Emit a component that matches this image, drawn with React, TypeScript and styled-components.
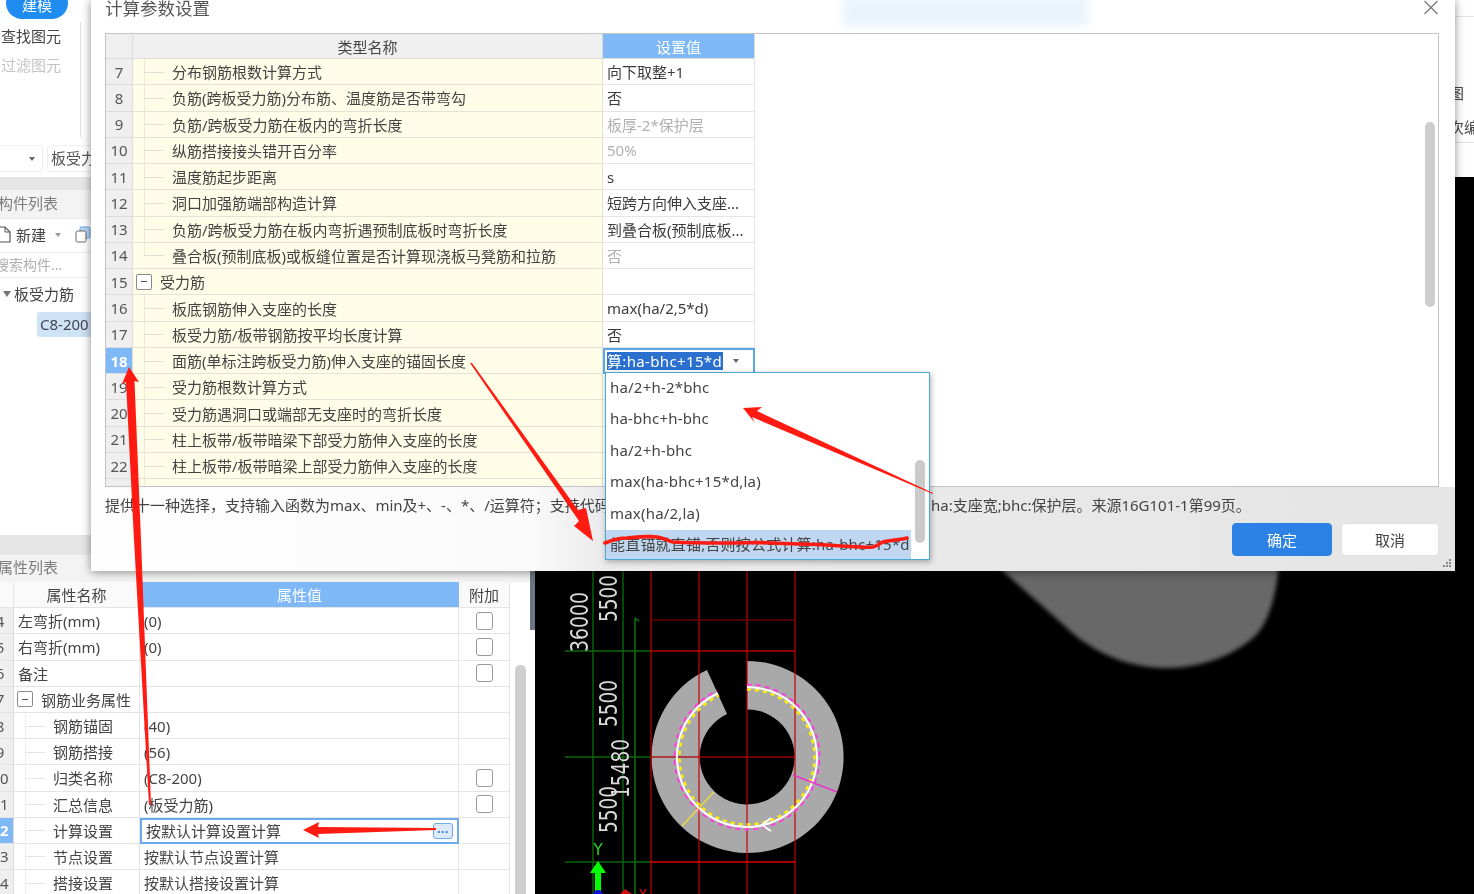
import React from "react";
import styled, { createGlobalStyle } from "styled-components";

const Global = createGlobalStyle`
  html, body { margin: 0; padding: 0; background: #fff; }
  body { font-family: "Noto Sans", "Noto Sans CJK SC", sans-serif; color: #3c3c3c; }
  * { box-sizing: border-box; }
`;

const Page = styled.div`
  position: relative;
  width: 1474px;
  height: 894px;
  overflow: hidden;
  display: flex;
  background: #fff;
  font-size: 15px;
  filter: blur(0.5px);
`;

/* ---------- left panel ---------- */
const LeftPanel = styled.div`
  width: 535px;
  height: 894px;
  flex: none;
  display: flex;
  flex-direction: column;
  overflow: hidden;
  background: #fff;
`;
const TopBlock = styled.div`
  height: 142px;
  flex: none;
  display: flex;
  flex-direction: column;
`;
const ModeButton = styled.div`
  width: 62px;
  height: 32px;
  margin: -13px 0 0 6px;
  padding-top: 2px;
  border-radius: 16px;
  background: #1e8cf0;
  color: #fff;
  display: flex;
  align-items: center;
  justify-content: center;
`;
const ToolGroup = styled.div`
  width: 81px;
  height: 115px;
  margin-top: 3px;
  padding-left: 1px;
  border-right: 1px solid #dedede;
`;
const ToolItem = styled.div<{ $off?: boolean }>`
  height: 29px;
  line-height: 29px;
  color: ${(p) => (p.$off ? "#c4c4c4" : "#444")};
`;
const FilterRow = styled.div`
  height: 27px;
  margin-top: 3px;
  flex: none;
  display: flex;
  gap: 4px;
`;
const SelectBox = styled.div`
  width: 43px;
  height: 27px;
  border: 1px solid #efefef;
  border-left: 0;
  border-radius: 0 4px 4px 0;
  display: flex;
  align-items: center;
  justify-content: flex-end;
  padding-right: 7px;
`;
const Caret = styled.span<{ $c?: string }>`
  width: 0;
  height: 0;
  border-left: 3px solid transparent;
  border-right: 3px solid transparent;
  border-top: 4px solid ${(p) => p.$c || "#666"};
`;
const InputBox = styled.div`
  width: 200px;
  height: 27px;
  border: 1px solid #efefef;
  border-radius: 4px;
  padding-left: 3px;
  line-height: 24px;
  color: #555;
  white-space: nowrap;
`;
const GrayBand = styled.div<{ $h: number; $mt?: number }>`
  height: ${(p) => p.$h}px;
  margin-top: ${(p) => p.$mt || 0}px;
  flex: none;
  background: #e6e6e6;
`;
const SectionHead = styled.div<{ $h: number }>`
  height: ${(p) => p.$h}px;
  flex: none;
  display: flex;
  align-items: center;
  padding-bottom: 4px;
  background: #f3f3f3;
  color: #7d7d7d;
  white-space: nowrap;
  text-indent: -2px;
`;
const NewRow = styled.div`
  height: 34px;
  flex: none;
  display: flex;
  align-items: center;
  padding-bottom: 2px;
  border-top: 1px solid #ececec;
  color: #444;
`;
const NewLabel = styled.span`
  margin-left: 5px;
`;
const NewCaret = styled.span`
  margin: 0 14px 0 9px;
  display: inline-flex;
`;
const SearchRow = styled.div`
  height: 26px;
  flex: none;
  display: flex;
  align-items: center;
  padding-bottom: 2px;
  border-top: 1px solid #ececec;
  border-bottom: 1px solid #ececec;
  color: #b0b0b0;
  font-size: 14px;
  white-space: nowrap;
  text-indent: -5px;
`;
const TreeRoot = styled.div`
  height: 22px;
  margin-top: 6px;
  flex: none;
  display: flex;
  align-items: center;
  gap: 3px;
  padding: 0 0 3px 3px;
  color: #444;
`;
const TreeCaret = styled.span`
  width: 0;
  height: 0;
  border-left: 4px solid transparent;
  border-right: 4px solid transparent;
  border-top: 6px solid #777;
`;
const TreeLeaf = styled.div`
  width: 70px;
  height: 25px;
  margin: 6px 0 0 37px;
  flex: none;
  padding-left: 3px;
  border-radius: 3px;
  background: #cfe3f6;
  line-height: 24px;
  white-space: nowrap;
  overflow: hidden;
  color: #445;
`;
const Filler = styled.div`
  flex: 1;
`;
const PropTable = styled.div`
  position: relative;
  flex: none;
  height: 312px;
`;
const PropRow = styled.div<{ $h?: number }>`
  display: grid;
  grid-template-columns: 14px 126px 319px 51px;
  height: ${(p) => p.$h || 26.2}px;
`;
const Cell = styled.div`
  border-bottom: 1.5px solid #e4e4e4;
  border-right: 1.5px solid #e4e4e4;
  display: flex;
  align-items: center;
  position: relative;
  white-space: nowrap;
  color: #444;
`;
const NumCell = styled(Cell)<{ $active?: boolean }>`
  background: ${(p) => (p.$active ? "#7eb8f6" : "#efefef")};
  color: ${(p) => (p.$active ? "#fff" : "#555")};
  font-weight: ${(p) => (p.$active ? 700 : 400)};
  border-right: 1.5px solid #dcdcdc;
`;
const NumText = styled.span`
  display: block;
  flex: none;
  width: 28px;
  margin-left: -14px;
  text-align: center;
`;
const HeadCell = styled(Cell)<{ $blue?: boolean }>`
  justify-content: center;
  background: ${(p) => (p.$blue ? "#7eb8f6" : "#fafafa")};
  color: ${(p) => (p.$blue ? "#fff" : "#444")};
  border-right: ${(p) => (p.$blue ? "0" : "1.5px solid #e4e4e4")};
`;
const PropName = styled(Cell)<{ $tree?: boolean; $group?: boolean }>`
  padding-left: ${(p) => (p.$tree ? 39 : p.$group ? 3 : 4)}px;
  ${(p) =>
    p.$tree
      ? `
    &::before { content: ""; position: absolute; left: 11px; top: 0; bottom: 0; width: 1px; background: #eeeeee; }
    &::after { content: ""; position: absolute; left: 11px; top: 50%; width: 20px; height: 1px; background: #e4e4e4; }
  `
      : ""}
`;
const PropValue = styled(Cell)`
  padding-left: 4px;
`;
const EditCell = styled.div`
  border: 2px solid #6cacee;
  display: flex;
  align-items: center;
  justify-content: space-between;
  padding: 0 4px 0 4px;
  white-space: nowrap;
  color: #444;
`;
const MoreButton = styled.div`
  width: 20px;
  height: 16px;
  border: 1px solid #6cacee;
  border-radius: 3px;
  background: #dceafb;
  color: #2b78d0;
  font-size: 12px;
  line-height: 9px;
  text-align: center;
  font-weight: 700;
  letter-spacing: 0.5px;
`;
const CheckCell = styled(Cell)`
  justify-content: center;
`;
const Check = styled.span`
  width: 17px;
  height: 18px;
  border: 1.5px solid #9a9a9a;
  border-radius: 3px;
  background: #fff;
`;
const FoldBox = styled.span`
  flex: none;
  width: 16px;
  height: 16px;
  border: 1.2px solid #8a8a8a;
  border-radius: 2px;
  margin-right: 8px;
  display: flex;
  align-items: center;
  justify-content: center;
  background: #fff;
  &::after { content: ""; width: 6px; height: 1.2px; background: #555; }
`;
const PropScroll = styled.div`
  position: absolute;
  left: 515px;
  top: 83px;
  width: 11px;
  height: 300px;
  border-radius: 5px;
  background: #cfcfcf;
`;
const SideBar = styled.div`
  position: absolute;
  left: 530px;
  top: -11px;
  width: 5px;
  height: 59px;
  background: #6b7680;
`;

/* ---------- right ---------- */
const RightColumn = styled.div`
  flex: 1;
  display: flex;
  flex-direction: column;
`;
const TopStrip = styled.div`
  height: 177px;
  flex: none;
  padding: 16px 0 0 914px;
  background: #fff;
  white-space: nowrap;
  color: #444;
`;
const StripLine = styled.div<{ $mt?: number }>`
  height: 1px;
  margin-left: -914px;
  margin-top: ${(p) => p.$mt || 0}px;
  background: #e4e4e4;
`;
const StripLabel = styled.div<{ $mt: number }>`
  margin-top: ${(p) => p.$mt}px;
  line-height: 20px;
  height: 20px;
`;
const Canvas = styled.div`
  flex: 1;
  background: #000;
  overflow: hidden;
  svg { display: block; }
`;

/* ---------- dialog ---------- */
const Dialog = styled.div`
  position: absolute;
  left: 91px;
  top: 0;
  width: 1364px;
  height: 571px;
  background: #fff;
  box-shadow: 0 1px 9px rgba(0, 0, 0, 0.45);
  display: flex;
  flex-direction: column;
  overflow: hidden;
`;
const TitleBar = styled.div`
  position: relative;
  height: 33px;
  flex: none;
  padding: 0 16px 0 14px;
  display: flex;
  justify-content: space-between;
  align-items: flex-start;
`;
const Title = styled.div`
  font-size: 17.5px;
  line-height: 16px;
  color: #555;
  white-space: nowrap;
`;
const Smudge = styled.div`
  position: absolute;
  left: 752px;
  top: -4px;
  width: 245px;
  height: 30px;
  background: #e9f4fd;
  filter: blur(5px);
`;
const ParamGrid = styled.div`
  position: relative;
  margin: 0 16px 0 14px;
  height: 454px;
  flex: none;
  border: 1px solid #c4c4c4;
  overflow: hidden;
  background: #fff;
`;
const GridRow = styled.div<{ $h?: number }>`
  display: grid;
  grid-template-columns: 27px 470px 152px;
  width: 649px;
  height: ${(p) => p.$h || 26.27}px;
`;
const GridNum = styled(Cell)<{ $active?: boolean }>`
  justify-content: center;
  background: ${(p) => (p.$active ? "#7eb8f6" : "#efefef")};
  color: ${(p) => (p.$active ? "#fff" : "#555")};
  font-weight: ${(p) => (p.$active ? 700 : 400)};
  border-right: 1.5px solid #dcdcdc;
  border-bottom: 1.5px solid #dcdcdc;
`;
const GridHead = styled(Cell)<{ $blue?: boolean }>`
  justify-content: center;
  background: ${(p) => (p.$blue ? "#7eb8f6" : "#efefef")};
  color: ${(p) => (p.$blue ? "#fff" : "#444")};
  border-bottom: 1.5px solid #dcdcdc;
  border-right: 1.5px solid #dcdcdc;
`;
const GridName = styled(Cell)<{ $tree?: boolean; $last?: boolean; $group?: boolean }>`
  background: #fffde7;
  border-right: 1.5px solid #e2e0cf;
  border-bottom: 1.5px solid #e4e2d2;
  padding-left: ${(p) => (p.$tree ? 39 : 3)}px;
  ${(p) =>
    p.$tree
      ? `
    &::before { content: ""; position: absolute; left: 11px; top: 0; bottom: ${p.$last ? "50%" : "0"}; width: 1px; background: #ebe9d8; }
    &::after { content: ""; position: absolute; left: 11px; top: 50%; width: 20px; height: 1px; background: #e2e0d0; }
  `
      : ""}
`;
const GridValue = styled(Cell)<{ $muted?: boolean }>`
  padding-left: 4px;
  overflow: hidden;
  color: ${(p) => (p.$muted ? "#b0b0b0" : "#3c3c3c")};
`;
const EditorCell = styled.div`
  border: 2px solid #5da6ea;
  display: flex;
  align-items: center;
  padding: 0 14px 0 2px;
  gap: 10px;
  color: #fff;
  white-space: nowrap;
  height: 26px;
  background: #fff;
`;
const SelText = styled.span`
  background: #2b6fcf;
  line-height: 18px;
  width: 116px;
  letter-spacing: 0.35px;
  overflow: hidden;
  flex: none;
`;
const GridScroll = styled.div`
  position: absolute;
  left: 1319px;
  top: 88px;
  width: 10px;
  height: 185px;
  border-radius: 5px;
  background: #cdcdcd;
`;
const Footer = styled.div`
  flex: 1;
  background: linear-gradient(90deg, #fdfdfd 0, #fbfbfb 32%, #ececec 37%, #e5e5e5 100%);
  padding: 8px 16px 0 14px;
  position: relative;
`;
const Description = styled.div`
  display: flex;
  height: 20px;
  line-height: 20px;
  white-space: nowrap;
  color: #444;
`;
const DescLeft = styled.div`
  width: 826px;
  overflow: hidden;
  flex: none;
`;
const Buttons = styled.div`
  margin-top: 8px;
  display: flex;
  justify-content: flex-end;
  gap: 9px;
`;
const Btn = styled.div<{ $primary?: boolean }>`
  width: ${(p) => (p.$primary ? 100 : 98)}px;
  height: 33px;
  border-radius: 4px;
  display: flex;
  align-items: center;
  justify-content: center;
  background: ${(p) => (p.$primary ? "#2c82e4" : "#fff")};
  color: ${(p) => (p.$primary ? "#fff" : "#444")};
  border: 1px solid ${(p) => (p.$primary ? "#2c82e4" : "#e0e0e0")};
`;
const Grip = styled.svg`
  position: absolute;
  right: 3px;
  bottom: 3px;
`;

/* ---------- dropdown ---------- */
const Dropdown = styled.div`
  position: absolute;
  left: 605px;
  top: 372px;
  width: 325px;
  height: 188px;
  border: 1.5px solid #48a8d8;
  background: #fff;
  box-shadow: 1px 2px 6px rgba(0, 0, 0, 0.3);
  overflow: hidden;
`;
const OptionList = styled.div`
  width: 305px;
`;
const OptionItem = styled.div<{ $on?: boolean }>`
  height: 31.4px;
  line-height: 29px;
  padding-left: 4px;
  letter-spacing: 0.2px;
  white-space: nowrap;
  overflow: hidden;
  background: ${(p) => (p.$on ? "#bfd7f0" : "transparent")};
  color: #444;
`;
const DropScroll = styled.div`
  position: absolute;
  left: 309px;
  top: 87px;
  width: 10px;
  height: 83px;
  border-radius: 5px;
  background: #cacaca;
`;

const Overlay = styled.svg`
  position: absolute;
  left: 0;
  top: 0;
  pointer-events: none;
`;

type P = { n: number; name?: string; value?: string; muted?: boolean; kind?: "tree" | "group" | "last" };
const params: P[] = [
  { n: 7, name: "分布钢筋根数计算方式", value: "向下取整+1", kind: "tree" },
  { n: 8, name: "负筋(跨板受力筋)分布筋、温度筋是否带弯勾", value: "否", kind: "tree" },
  { n: 9, name: "负筋/跨板受力筋在板内的弯折长度", value: "板厚-2*保护层", muted: true, kind: "tree" },
  { n: 10, name: "纵筋搭接接头错开百分率", value: "50%", muted: true, kind: "tree" },
  { n: 11, name: "温度筋起步距离", value: "s", kind: "tree" },
  { n: 12, name: "洞口加强筋端部构造计算", value: "短跨方向伸入支座...", kind: "tree" },
  { n: 13, name: "负筋/跨板受力筋在板内弯折遇预制底板时弯折长度", value: "到叠合板(预制底板...", kind: "tree" },
  { n: 14, name: "叠合板(预制底板)或板缝位置是否计算现浇板马凳筋和拉筋", value: "否", muted: true, kind: "last" },
  { n: 15, name: "受力筋", kind: "group" },
  { n: 16, name: "板底钢筋伸入支座的长度", value: "max(ha/2,5*d)", kind: "tree" },
  { n: 17, name: "板受力筋/板带钢筋按平均长度计算", value: "否", kind: "tree" },
  { n: 18, name: "面筋(单标注跨板受力筋)伸入支座的锚固长度", kind: "tree" },
  { n: 19, name: "受力筋根数计算方式", kind: "tree" },
  { n: 20, name: "受力筋遇洞口或端部无支座时的弯折长度", kind: "tree" },
  { n: 21, name: "柱上板带/板带暗梁下部受力筋伸入支座的长度", kind: "tree" },
  { n: 22, name: "柱上板带/板带暗梁上部受力筋伸入支座的长度", kind: "tree" },
];

const options = [
  "ha/2+h-2*bhc",
  "ha-bhc+h-bhc",
  "ha/2+h-bhc",
  "max(ha-bhc+15*d,la)",
  "max(ha/2,la)",
  "能直锚就直锚,否则按公式计算:ha-bhc+15*d",
];

type R = { n: number; name: string; value?: string; check?: boolean; kind?: "tree" | "group"; edit?: boolean };
const props: R[] = [
  { n: 4, name: "左弯折(mm)", value: "(0)", check: true },
  { n: 5, name: "右弯折(mm)", value: "(0)", check: true },
  { n: 6, name: "备注", check: true },
  { n: 7, name: "钢筋业务属性", kind: "group" },
  { n: 8, name: "钢筋锚固", value: "(40)", kind: "tree" },
  { n: 9, name: "钢筋搭接", value: "(56)", kind: "tree" },
  { n: 10, name: "归类名称", value: "(C8-200)", check: true, kind: "tree" },
  { n: 11, name: "汇总信息", value: "(板受力筋)", check: true, kind: "tree" },
  { n: 12, name: "计算设置", value: "按默认计算设置计算", kind: "tree", edit: true },
  { n: 13, name: "节点设置", value: "按默认节点设置计算", kind: "tree" },
  { n: 14, name: "搭接设置", value: "按默认搭接设置计算", kind: "tree" },
];

const arc = (r: number) => {
  const s = 0.413;
  const c = 0.911;
  return `M747 ${757 - r} A${r} ${r} 0 1 1 ${747 - r * s} ${757 - r * c}`;
};

const Drawing = () => (
  <svg width={939} height={717} viewBox="535 177 939 717">
    <defs>
      <filter id="soft" x="-5%" y="-5%" width="110%" height="110%">
        <feGaussianBlur stdDeviation="2" />
      </filter>
    </defs>
    <path
      d="M985 555 L1077 637 C1105 658 1135 668 1167 668 C1200 668 1232 656 1253 638 C1268 624 1276 600 1280 555 Z"
      fill="#676767"
      filter="url(#soft)"
    />
    <path
      d="M747 661 A96 96 0 1 1 707 670 L727 714 A47.5 47.5 0 1 0 747 709.5 Z"
      fill="#a9a9a9"
    />
    <g fill="none" strokeWidth="1.4">
      <path d="M593 560V894M623 560V894" stroke="#0a660a" />
      <path d="M635 618V894M635 618l4 3" stroke="#0b7d0b" />
      <path d="M565 651H651M565 757H651M565 862H651" stroke="#0a660a" />
    </g>
    <g fill="none" strokeWidth="1.4" opacity="0.85">
      <path d="M651 560V894M699 560V894M747 560V894M795 560V894" stroke="#c80000" />
      <path d="M651 620H795" stroke="#7a0000" />
      <path d="M651 651H795" stroke="#d80000" />
      <path d="M651 757H795" stroke="#b00000" />
      <path d="M651 862H795" stroke="#ff0000" />
    </g>
    <g fill="none">
      <path d={arc(72.5)} stroke="#ff40e0" strokeWidth="2" strokeDasharray="5 4" />
      <path d={arc(67.5)} stroke="#ffee00" strokeWidth="2.4" strokeDasharray="4 4" />
      <path d={arc(70)} stroke="#fff" strokeWidth="2" />
      <path d="M771 818L762 825L771 831" stroke="#fff" strokeWidth="2" />
      <path d="M714 792L682 826" stroke="#ecdc40" strokeWidth="1.4" />
      <path d="M793 775L837 792" stroke="#f030d0" strokeWidth="1.4" />
    </g>
    <g fill="#d8d8d8" fontFamily="'DejaVu Sans', sans-serif" fontSize="24">
      <text transform="translate(588 652) rotate(-90)" textLength="60" lengthAdjust="spacingAndGlyphs">36000</text>
      <text transform="translate(617 622) rotate(-90)" textLength="47" lengthAdjust="spacingAndGlyphs">5500</text>
      <text transform="translate(617 727) rotate(-90)" textLength="47" lengthAdjust="spacingAndGlyphs">5500</text>
      <text transform="translate(617 833) rotate(-90)" textLength="47" lengthAdjust="spacingAndGlyphs">5500</text>
      <text transform="translate(629 798) rotate(-90)" textLength="59" lengthAdjust="spacingAndGlyphs">15480</text>
    </g>
    <text x="598" y="855" fill="#22dd22" fontSize="15" fontFamily="'DejaVu Sans', sans-serif" textAnchor="middle">Y</text>
    <path d="M595 894V873H590L598 861L606 873H601V894Z" fill="#00ff00" />
    <circle cx="598" cy="895" r="5" fill="#1010d0" />
    <path d="M620 894L625 889L632 894Z" fill="#cc1010" />
    <text x="643" y="899" fill="#e01010" fontSize="14" fontFamily="'DejaVu Sans', sans-serif" textAnchor="middle">X</text>
  </svg>
);

export default function App() {
  return (
    <Page>
      <Global />
      <LeftPanel>
        <TopBlock>
          <ModeButton>建模</ModeButton>
          <ToolGroup>
            <ToolItem>查找图元</ToolItem>
            <ToolItem $off>过滤图元</ToolItem>
          </ToolGroup>
        </TopBlock>
        <FilterRow>
          <SelectBox>
            <Caret />
          </SelectBox>
          <InputBox>板受力筋</InputBox>
        </FilterRow>
        <GrayBand $h={13} $mt={5} />
        <SectionHead $h={28}>构件列表</SectionHead>
        <NewRow>
          <svg width="11" height="17" viewBox="0 0 11 17" fill="none">
            <path d="M-3 1H5L10 6V16H-3Z" stroke="#555" strokeWidth="1.2" />
            <path d="M5 1V6H10" stroke="#555" strokeWidth="1" />
          </svg>
          <NewLabel>新建</NewLabel>
          <NewCaret>
            <Caret $c="#999" />
          </NewCaret>
          <svg width="16" height="17" viewBox="0 0 16 17" fill="none">
            <rect x="5" y="1" width="10" height="11" rx="1.5" fill="#bcd6f5" stroke="#5f9fe6" />
            <rect x="1" y="5" width="10" height="11" rx="1.5" fill="#fff" stroke="#666" />
          </svg>
        </NewRow>
        <SearchRow>搜索构件...</SearchRow>
        <TreeRoot>
          <TreeCaret />
          板受力筋
        </TreeRoot>
        <TreeLeaf>C8-200</TreeLeaf>
        <Filler />
        <GrayBand $h={20} />
        <SectionHead $h={27}>属性列表</SectionHead>
        <PropTable>
          <SideBar />
          <PropScroll />
          <PropRow>
            <HeadCell />
            <HeadCell>属性名称</HeadCell>
            <HeadCell $blue>属性值</HeadCell>
            <HeadCell>附加</HeadCell>
          </PropRow>
          {props.map((r) => (
            <PropRow key={r.n}>
              <NumCell $active={r.edit}>
                <NumText>{r.n}</NumText>
              </NumCell>
              <PropName $tree={r.kind === "tree"} $group={r.kind === "group"}>
                {r.kind === "group" && <FoldBox />}
                {r.name}
              </PropName>
              {r.edit ? (
                <EditCell>
                  {r.value}
                  <MoreButton>...</MoreButton>
                </EditCell>
              ) : (
                <PropValue>{r.value}</PropValue>
              )}
              <CheckCell>{r.check && <Check />}</CheckCell>
            </PropRow>
          ))}
        </PropTable>
      </LeftPanel>

      <RightColumn>
        <TopStrip>
          <StripLine />
          <StripLabel $mt={66}>图</StripLabel>
          <StripLabel $mt={14}>次编</StripLabel>
          <StripLine $mt={5} />
        </TopStrip>
        <Canvas>
          <Drawing />
        </Canvas>
      </RightColumn>

      <Dialog>
        <TitleBar>
          <Smudge />
          <Title>计算参数设置</Title>
          <svg width="16" height="16" viewBox="0 0 16 16" fill="none" stroke="#777" strokeWidth="1.2">
            <path d="M1.5 1L14.5 14M14.5 1L1.5 14" />
          </svg>
        </TitleBar>
        <ParamGrid>
          <GridScroll />
          <GridRow $h={25}>
            <GridHead />
            <GridHead>类型名称</GridHead>
            <GridHead $blue>设置值</GridHead>
          </GridRow>
          {params.map((p) => (
            <GridRow key={p.n}>
              <GridNum $active={p.n === 18}>{p.n}</GridNum>
              <GridName $tree={p.kind !== "group"} $last={p.kind === "last"}>
                {p.kind === "group" && <FoldBox />}
                {p.name}
              </GridName>
              {p.n === 18 ? (
                <EditorCell>
                  <SelText>算:ha-bhc+15*d</SelText>
                  <Caret />
                </EditorCell>
              ) : (
                <GridValue $muted={p.muted}>{p.value}</GridValue>
              )}
            </GridRow>
          ))}
          <GridRow>
            <GridNum />
            <GridName $tree />
            <GridValue />
          </GridRow>
        </ParamGrid>
        <Footer>
          <Description>
            <DescLeft>提供十一种选择，支持输入函数为max、min及+、-、*、/运算符；支持代码</DescLeft>
            <span>ha:支座宽;bhc:保护层。来源16G101-1第99页。</span>
          </Description>
          <Buttons>
            <Btn $primary>确定</Btn>
            <Btn>取消</Btn>
          </Buttons>
          <Grip width="10" height="10" viewBox="0 0 10 10" fill="#888">
            <rect x="7" y="1" width="2" height="2" />
            <rect x="4" y="4" width="2" height="2" />
            <rect x="7" y="4" width="2" height="2" />
            <rect x="1" y="7" width="2" height="2" />
            <rect x="4" y="7" width="2" height="2" />
            <rect x="7" y="7" width="2" height="2" />
          </Grip>
        </Footer>
      </Dialog>

      <Dropdown>
        <OptionList>
          {options.map((o, i) => (
            <OptionItem key={o} $on={i === options.length - 1}>
              {o}
            </OptionItem>
          ))}
        </OptionList>
        <DropScroll />
      </Dropdown>

      <Overlay width={1474} height={894} viewBox="0 0 1474 894">
        <g fill="#ff1a12">
          <path d="M129 367L139 382L134.5 381L141 540L151 805L149 805L134 540L126 382L122 384Z" />
          <path d="M470 363L472 363L578 510L586 508L593 541L574 526L579 521Z" />
          <path d="M743 408L762 407L757 411L933 493L933 494L752 417L755 423Z" />
          <path d="M303 830L319 822L318 827L436 828L436 830L318 834L319 838Z" />
        </g>
        <path
          d="M605 543C612 540 620 538 627 538C638 537 648 536 657 537C664 538 668 541 673 542C690 543 710 543 727 543C745 543 760 542 773 543C790 544 810 544 827 545C845 546 860 548 873 547C878 546 880 543 883 542C890 540 900 540 907 538"
          fill="none"
          stroke="#ff1a12"
          strokeWidth="3.6"
          strokeLinecap="round"
        />
      </Overlay>
    </Page>
  );
}
